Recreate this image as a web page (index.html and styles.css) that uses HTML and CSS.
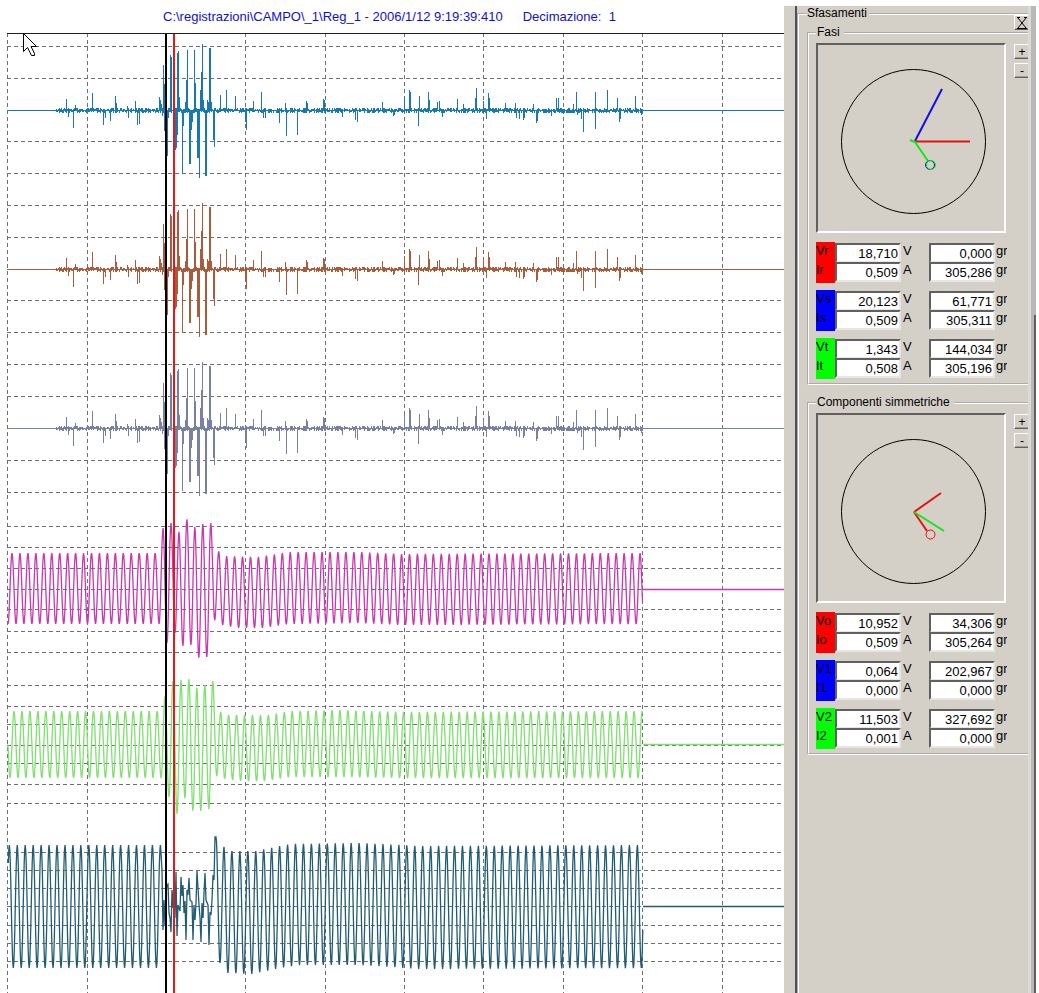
FILE: index.html
```
<!DOCTYPE html>
<html lang="it">

<head>
    <meta charset="UTF-8">
    <meta name="viewport" content="width=device-width, initial-scale=1.0">
    <title>Sfasamenti</title>
    <link rel="stylesheet" href="styles.css">
</head>

<body>
    <main class="recording">
        <header class="recording-header">
            <span>C:\registrazioni\CAMPO\_1\Reg_1 - 2006/1/12 9:19:39:410</span>
            <span>Decimazione:&nbsp; 1</span>
        </header>
        <svg class="plot" id="plot" role="img" aria-label="Forme d'onda registrate">
            <g id="grid" class="grid"></g>
            <g id="traces" class="traces"></g>
            <line class="cursor-black" x1="166" y1="0" x2="166" y2="100%" />
            <line class="cursor-red" x1="174" y1="0" x2="174" y2="100%" />
            <line class="plot-top" x1="7" y1="0.5" x2="100%" y2="0.5" />
            <path class="pointer" d="M23.5 0.5V18.5L27.5 14.5L31.5 22.5H34.5V20.5L31 13.5H36.5Z" />
        </svg>
    </main>

    <div class="splitter"></div>

    <aside class="panel">
        <fieldset class="group group-outer">
            <legend>Sfasamenti</legend>
            <button class="btn btn-close" aria-label="Chiudi">
                <svg width="10" height="12" viewBox="0 0 10 12"><path d="M1 1L9 11M9 1L1 11M0 11.5H10M0 0.5H3M7 0.5H10" /></svg>
            </button>

            <fieldset class="group">
                <legend>Fasi</legend>
                <div class="phasor-row">
                    <svg class="phasor" viewBox="0 0 186 186">
                        <circle class="dial" cx="95.5" cy="96.5" r="72" />
                        <path class="blue" d="M97 96L124 44" />
                        <path class="red" d="M97 96.5H152" />
                        <circle class="blue thin" cx="112" cy="120" r="4.5" />
                        <path class="green" d="M92 95L97 97L110 116" />
                        <circle class="green thin" cx="113" cy="120" r="4.5" />
                    </svg>
                    <div class="zoom-buttons">
                        <button class="btn">+</button>
                        <button class="btn">-</button>
                    </div>
                </div>
                <div class="values" id="fasi"></div>
            </fieldset>

            <fieldset class="group">
                <legend>Componenti simmetriche</legend>
                <div class="phasor-row">
                    <svg class="phasor" viewBox="0 0 186 186">
                        <circle class="dial" cx="95.5" cy="96.5" r="72" />
                        <path class="red" d="M96 97L123 78" />
                        <path class="red" d="M96 97L109 116" />
                        <path class="green" d="M96 97L126 116" />
                        <circle class="red thin" cx="112.5" cy="119.5" r="4.5" />
                    </svg>
                    <div class="zoom-buttons">
                        <button class="btn">+</button>
                        <button class="btn">-</button>
                    </div>
                </div>
                <div class="values" id="componenti"></div>
            </fieldset>
        </fieldset>
    </aside>
    <div class="scroll-edge"></div>

    <script src="script.js"></script>
</body>

</html>
```
FILE: styles.css
```
* {
    box-sizing: border-box;
}

body {
    margin: 0;
    padding: 6px 3px 0 0;
    min-height: 100vh;
    display: flex;
    background-color: #fff;
    color: #000;
    font-family: "Liberation Sans", Arial, sans-serif;
    font-size: 12px;
}

.recording {
    flex: 1;
    min-width: 0;
    display: flex;
    flex-direction: column;
}

.recording-header {
    display: flex;
    gap: 20px;
    height: 27px;
    padding: 3px 0 0 163px;
    font-size: 13px;
    line-height: 15px;
    color: #1010d0;
    white-space: nowrap;
}

.plot {
    display: block;
    width: 100%;
    flex: 1;
    min-height: 960px;
    shape-rendering: crispEdges;
}

.grid line {
    stroke: #707070;
    stroke-dasharray: 4 3;
}

.traces path {
    fill: none;
    stroke-width: 1;
}

.traces .wave {
    stroke-width: 1.3;
    shape-rendering: auto;
}

.plot-top {
    stroke: #202020;
}

.cursor-black {
    stroke: #000;
    stroke-width: 2;
}

.cursor-red {
    stroke: #e81818;
    stroke-width: 2;
}

.pointer {
    fill: #fff;
    stroke: #000;
    shape-rendering: auto;
}

.splitter {
    width: 13px;
    background-color: #d4d0c8;
    border-right: 2px solid #505058;
}

.panel {
    width: 231px;
    overflow: hidden;
    background-color: #d4d0c8;
}

.group {
    margin: 0 0 10px;
    padding: 3px 0 4px 7px;
    min-width: 0;
    border: 2px groove #fff;
    border-right: none;
}

.group legend {
    margin-left: 0;
    padding: 0 4px 0 1px;
    line-height: 15px;
}

.group-outer {
    position: relative;
    height: 100%;
    margin: 0;
    padding: 4px 0 0 8px;
    border-bottom: none;
}

.group-outer > legend {
    padding: 0 2px 0 0;
}

.btn {
    display: flex;
    align-items: center;
    justify-content: center;
    flex: none;
    width: 16px;
    height: 15px;
    padding: 0;
    border: 1px solid;
    border-color: #fff #606060 #606060 #fff;
    box-shadow: inset -1px -1px #a0a0a0;
    background-color: #d4d0c8;
    color: #000;
    font-family: inherit;
    font-size: 12px;
    line-height: 12px;
}

.btn-close {
    position: absolute;
    top: -6px;
    right: -2px;
    z-index: 1;
}

.btn-close svg {
    fill: none;
    stroke: #000;
}

.phasor-row {
    display: flex;
    gap: 8px;
}

.phasor {
    flex: none;
    width: 190px;
    height: 190px;
    border: 2px solid;
    border-color: #606060 #fff #fff #606060;
    fill: none;
    stroke-width: 2;
}

.dial {
    stroke: #000;
    stroke-width: 1;
}

.phasor .red {
    stroke: #e81010;
}

.phasor .blue {
    stroke: #1010e0;
}

.phasor .green {
    stroke: #10e810;
}

.phasor .thin {
    stroke-width: 1;
}

.zoom-buttons {
    display: flex;
    flex-direction: column;
    gap: 4px;
    padding-top: 1px;
}

.values {
    display: flex;
    flex-direction: column;
    gap: 7px;
    margin-top: 9px;
}

.value-block {
    display: grid;
    grid-template-columns: 19px 66px 28px 66px 12px;
    grid-template-rows: 19px 22px;
    font-size: 13px;
}

.value-block label {
    line-height: 18px;
}

.value-block span {
    padding-left: 2px;
    line-height: 18px;
    overflow: hidden;
}

.value-block .degrees {
    padding-left: 1px;
}

.value-block input {
    width: 100%;
    height: 20px;
    margin-top: 1px;
    padding: 1px 1px 0 0;
    border: 2px solid;
    border-color: #606060 #e8e6e0 #e8e6e0 #606060;
    border-radius: 0;
    background-color: #fff;
    color: #000;
    font-family: inherit;
    font-size: 13px;
    text-align: right;
}

.label-red {
    background-color: #f00;
}

.label-blue {
    background-color: #00f;
}

.label-green {
    background-color: #0f0;
}

.scroll-edge {
    width: 8px;
    background: linear-gradient(to right, #dcdad4 3px, #b8b8b8 3px);
}

.scroll-edge::after {
    content: "";
    display: block;
    width: 2px;
    height: calc(100% - 309px);
    margin: 309px 0 0 6px;
    background-color: #606060;
}
```
FILE: script.js
```
const SVG_NS = 'http://www.w3.org/2000/svg';
const gridEl = document.getElementById('grid');
const tracesEl = document.getElementById('traces');

const START = 8;
const END = 643;
const HALF_PERIOD = 3.975;

const gridX = [7, 87, 166, 245, 325, 404, 483, 563, 642, 722];
const gridY = [
    13, 45, 77, 108, 140,
    172, 204, 236, 267, 299,
    331, 363, 395, 427, 459,
    493, 514, 535, 556, 576, 598, 619,
    652, 673, 691, 712, 730, 751, 770,
    819, 837, 855, 873, 892, 910, 928
];

// [x, height] of every spike, positive = up
const spikes = [
    [66, 11], [68, -7], [73, -18], [75, 5], [92, 17], [103, -15], [105, -8], [110, -11], [115, 14], [116, 7],
    [127, 4], [128, -8], [135, 9], [137, -15], [139, -14], [159, 13], [160, 10], [161, 6], [162, -6], [163, 45],
    [164, 26], [164, -21], [165, -22], [166, -46], [167, -46], [168, -8], [170, 55], [171, 53], [173, -50], [175, -40],
    [176, -38], [177, 57], [177, -25], [178, 59], [179, 13], [182, -63], [183, -16], [185, 8], [186, 30], [187, 60],
    [189, -54], [190, -54], [191, -20], [192, -12], [194, 60], [195, 27], [197, -48], [198, -48], [199, -68], [200, 20],
    [201, 38], [202, 66], [203, 10], [205, -66], [206, -66], [207, 10], [208, 8], [209, 62], [210, 62], [211, 8],
    [213, -30], [214, -37], [220, 15], [226, 20], [235, 14], [245, -12], [246, -20], [253, 9], [261, 18], [263, -8],
    [265, -8], [279, -13], [285, 7], [286, -26], [297, -25], [306, 9], [307, 7], [323, 11], [324, 10], [342, -7],
    [355, -10], [357, -12], [382, 8], [393, -6], [394, -5], [404, 13], [409, 20], [410, 18], [418, -16], [419, 14],
    [428, 18], [429, 10], [437, 8], [439, 9], [442, -7], [457, 11], [463, 6], [475, 12], [476, 22], [483, 9],
    [486, -9], [488, 17], [489, 12], [505, 7], [515, 7], [516, -8], [519, -9], [523, -10], [524, -8], [533, 6],
    [536, -13], [537, -11], [551, -6], [556, 12], [558, 12], [573, 6], [576, 18], [577, -5], [581, -9], [583, -22],
    [595, 18], [595, -19], [607, 20], [617, 12], [619, -12], [620, -9], [635, 14], [641, -5]
];

// envelopes of the sine channels: [x, y] of the crests and of the troughs
const waves = [
    {
        color: '#c838b0', base: 556, phase: 12,
        top: [[0, 520], [158, 520], [163, 495], [171, 490], [179, 499], [187, 486], [195, 494], [203, 491], [211, 490],
            [218, 518], [226, 523], [258, 524], [290, 519], [360, 519], [400, 521], [650, 520]],
        bottom: [[0, 591], [160, 591], [167, 610], [175, 600], [183, 613], [191, 612], [199, 625], [207, 624], [215, 586],
            [222, 592], [238, 595], [262, 595], [290, 591], [360, 590], [400, 592], [650, 591]]
    },
    {
        color: '#80e070', base: 711, phase: 14,
        top: [[0, 678], [158, 678], [165, 663], [173, 648], [181, 647], [189, 646], [197, 655], [205, 652], [213, 648],
            [221, 680], [229, 682], [268, 682], [290, 678], [340, 677], [400, 679], [650, 678]],
        bottom: [[0, 745], [161, 745], [169, 764], [177, 781], [185, 765], [193, 778], [201, 778], [209, 776], [217, 742],
            [225, 746], [241, 748], [265, 748], [290, 744], [340, 744], [400, 745], [650, 745]]
    },
    {
        color: '#205c74', base: 873, phase: 9.3,
        top: [[0, 812], [208, 812], [216, 804], [224, 814], [232, 818], [256, 818], [290, 811], [360, 810], [420, 813], [650, 812]],
        bottom: [[0, 935], [212, 935], [220, 930], [228, 940], [252, 941], [280, 935], [300, 932], [360, 932], [420, 936], [650, 935]],
        fault: [[162, 837], [163, 897], [164, 867], [165, 892], [166, 860], [167, 852], [168, 851], [169, 880], [170, 885],
            [171, 899], [172, 857], [173, 875], [174, 847], [175, 885], [176, 839], [177, 903], [178, 872], [180, 878],
            [181, 844], [182, 863], [183, 852], [184, 880], [185, 868], [186, 907], [187, 857], [188, 862], [189, 845],
            [190, 867], [192, 869], [193, 907], [194, 872], [195, 887], [196, 870], [197, 838], [199, 872], [200, 885],
            [201, 909], [202, 870], [203, 885], [204, 860], [205, 840], [206, 867], [208, 872], [209, 912], [210, 879],
            [211, 882], [212, 867], [213, 842], [214, 847], [215, 804]]
    }
];

function addLine(x1, y1, x2, y2) {
    const line = document.createElementNS(SVG_NS, 'line');
    line.setAttribute('x1', x1);
    line.setAttribute('y1', y1);
    line.setAttribute('x2', x2);
    line.setAttribute('y2', y2);
    gridEl.appendChild(line);
}

function addTrace(d, color, base, className) {
    const path = document.createElementNS(SVG_NS, 'path');
    path.setAttribute('class', className);
    path.setAttribute('d', `${d}M${END} ${base + 0.5}H4000`);
    path.setAttribute('stroke', color);
    tracesEl.appendChild(path);
}

function interpolate(keys, x) {
    for (let i = 1; i < keys.length; i++) {
        const [x0, y0] = keys[i - 1];
        const [x1, y1] = keys[i];
        if (x <= x1) {
            return y0 + (y1 - y0) * (x - x0) / (x1 - x0);
        }
    }
    return keys[keys.length - 1][1];
}

function drawSpikes(base, color) {
    let d = `M${START} ${base + 0.5}H${END}`;
    let seed = 7;
    for (let x = 56; x < END; x++) {
        seed = (seed * 1103 + 377) % 9973;
        const up = seed % 3;
        const down = (seed >> 3) % 3;
        d += `M${x + 0.5} ${base - up}V${base + 1 + down}`;
    }
    spikes.forEach(([x, h]) => {
        d += `M${x + 0.5} ${base + 0.5}V${base - h}`;
    });
    addTrace(d, color, base, 'spikes');
}

function drawWave(wave) {
    const points = [];
    for (let k = -2; ; k++) {
        const x0 = wave.phase + k * HALF_PERIOD;
        if (x0 > END) break;
        const isTop = k % 2 === 0;
        const x1 = x0 + HALF_PERIOD;
        const y0 = interpolate(isTop ? wave.top : wave.bottom, x0);
        const y1 = interpolate(isTop ? wave.bottom : wave.top, x1);
        for (let s = 0; s < 8; s++) {
            const x = x0 + HALF_PERIOD * s / 8;
            const y = y0 + (y1 - y0) * (1 - Math.cos(Math.PI * s / 8)) / 2;
            const inFault = wave.fault && x > 161 && x < 216;
            if (x >= START && x <= END && !inFault) {
                points.push([x, y]);
            }
        }
    }
    if (wave.fault) {
        points.push(...wave.fault);
        points.sort((a, b) => a[0] - b[0]);
    }
    const d = 'M' + points.map(([x, y]) => `${x.toFixed(1)} ${y.toFixed(1)}`).join('L');
    addTrace(d, wave.color, wave.base, 'wave');
}

gridX.forEach(x => addLine(x + 0.5, 0, x + 0.5, '100%'));
gridY.forEach(y => addLine(7, y + 0.5, '100%', y + 0.5));
drawSpikes(77, '#1878b0');
drawSpikes(236, '#a85c3c');
drawSpikes(395, '#7880a4');
waves.forEach(drawWave);

// label, value, unit, angle
const measures = {
    fasi: [
        ['red', ['Vr', '18,710', 'V', '0,000'], ['Ir', '0,509', 'A', '305,286']],
        ['blue', ['Vs', '20,123', 'V', '61,771'], ['Is', '0,509', 'A', '305,311']],
        ['green', ['Vt', '1,343', 'V', '144,034'], ['It', '0,508', 'A', '305,196']]
    ],
    componenti: [
        ['red', ['Vo', '10,952', 'V', '34,306'], ['Io', '0,509', 'A', '305,264']],
        ['blue', ['V1', '0,064', 'V', '202,967'], ['I1', '0,000', 'A', '0,000']],
        ['green', ['V2', '11,503', 'V', '327,692'], ['I2', '0,001', 'A', '0,000']]
    ]
};

for (const id in measures) {
    document.getElementById(id).innerHTML = measures[id].map(([color, ...rows]) => `
        <div class="value-block">
            ${rows.map(([label, value, unit, angle]) => `
                <label class="label-${color}" for="${label}">${label}</label>
                <input id="${label}" value="${value}" readonly>
                <span>${unit}</span>
                <input aria-label="${label} gradi" value="${angle}" readonly>
                <span class="degrees">gr</span>
            `).join('')}
        </div>
    `).join('');
}
```
